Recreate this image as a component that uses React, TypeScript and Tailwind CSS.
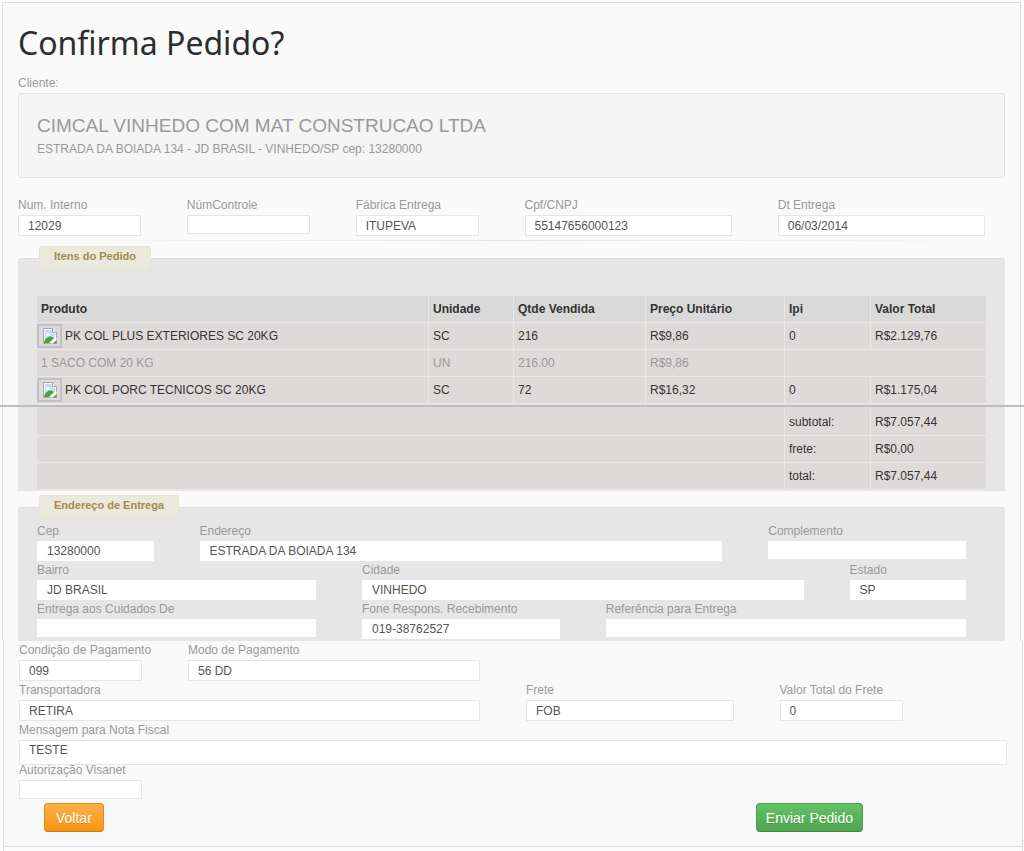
import { useId } from 'react';
import clsx from 'clsx';

interface FieldProps {
    label: string;
    value?: string;
    span: string;
    // 'framed' fields sit on the page, 'plain' ones inside a grey panel
    variant?: 'framed' | 'plain';
}

interface Item {
    produto: string;
    unidade: string;
    qtde: string;
    preco: string;
    ipi?: string;
    total?: string;
}

const itens: Item[] = [
    { produto: 'PK COL PLUS EXTERIORES SC 20KG', unidade: 'SC', qtde: '216', preco: 'R$9,86', ipi: '0', total: 'R$2.129,76' },
    { produto: '1 SACO COM 20 KG', unidade: 'UN', qtde: '216.00', preco: 'R$9,86' },
    { produto: 'PK COL PORC TECNICOS SC 20KG', unidade: 'SC', qtde: '72', preco: 'R$16,32', ipi: '0', total: 'R$1.175,04' },
];

const totais = [
    { nome: 'subtotal:', valor: 'R$7.057,44' },
    { nome: 'frete:', valor: 'R$0,00' },
    { nome: 'total:', valor: 'R$7.057,44' },
];

const cell = 'h-[27px] border-b border-l border-[#e9e7e7] px-1 py-0 text-left first:border-l-0';

function Field({ label, value = '', span, variant = 'framed' }: FieldProps) {
    const id = useId();
    const framed = variant === 'framed';

    return (
        <div className={clsx('flex flex-col pr-5', span)}>
            <label htmlFor={id} className="h-[19px] leading-[19px] whitespace-nowrap text-[#999]">
                {label}
            </label>
            <input
                id={id}
                type="text"
                defaultValue={value}
                className={clsx(
                    'w-full bg-white text-[#555] outline-none',
                    framed ? 'border border-[#e6e6e6] px-[9px]' : 'px-[10px]',
                    framed && (value ? 'h-[21px]' : 'h-[19px]'),
                    !framed && (value ? 'h-5' : 'h-[18px]'),
                )}
            />
        </div>
    );
}

function BrokenImage() {
    return (
        <span className="flex h-6 w-[25px] shrink-0 items-center justify-center border-2 border-[#bfc1c6]">
            <svg width="14" height="16" viewBox="0 0 14 16" aria-hidden="true">
                <path d="M.5.5h9l4 4v11H.5z" fill="#fff" stroke="#a5a8ad" />
                <path d="M2 2h7v3.500h3V10L7 14H2z" fill="#c6dbf8" />
                <path d="M3 6.500c0-2 3-2 3-.5 2 0 2 2 .5 2H3.500z" fill="#fff" />
                <path d="M1 14.500c1-4 5-7 8-5.500l2 1-5 5H1z" fill="#48a43c" />
                <path d="M13.500 9.500 7.500 15.500h2l4-3.500z" fill="#fff" />
                <path d="M13.500 12 10 15.500h3.500z" fill="#48a43c" />
                <path d="M9.500.5v4h4" fill="#f3f3f3" stroke="#a5a8ad" />
            </svg>
        </span>
    );
}

function PanelTitle({ children }: { children: string }) {
    return (
        <h2 className="-mt-[13px] ml-[21px] h-6 w-fit rounded-t-[3px] border border-[#e6e3d8] bg-[#ebe8dc] px-[14px] text-[11px] leading-[19px] font-bold text-[#a48b4e]">
            {children}
        </h2>
    );
}

function Columns() {
    return (
        <colgroup>
            <col />
            <col className="w-[85px]" />
            <col className="w-[132px]" />
            <col className="w-[139px]" />
            <col className="w-[86px]" />
            <col className="w-[116px]" />
        </colgroup>
    );
}

export default function App() {
    return (
        <form
            className="min-h-screen bg-[#fcfcfc] font-['Liberation_Sans',Arial,sans-serif] text-[12px] leading-5 text-[#333]"
            onSubmit={(e) => e.preventDefault()}
        >
            {/* Customer and ordered items */}
            <div className="border-b-2 border-[#bdbdbd] pt-[2px] pr-[3px] pl-[2px]">
                <div className="border-x border-t border-[#ddd] bg-[#fafafa] px-[15px]">
                    <h1 className="pt-4 pb-[6px] font-['Noto_Sans',sans-serif] text-[32px] leading-[48px] text-[#2d2d2d]">
                        Confirma Pedido?
                    </h1>
                    <p className="leading-5 text-[#999]">Cliente:</p>
                    <div className="h-[85px] rounded-[3px] border border-[#e3e3e3] bg-[#f5f5f5] px-[18px] pt-[19px] text-[#999]">
                        <p className="text-[19px] leading-[26px]">CIMCAL VINHEDO COM MAT CONSTRUCAO LTDA</p>
                        <p>ESTRADA DA BOIADA 134 - JD BRASIL - VINHEDO/SP cep: 13280000</p>
                    </div>

                    <div className="mt-[18px] grid h-11 grid-cols-12 gap-x-[26px]">
                        <Field label="Num. Interno" value="12029" span="col-span-2" />
                        <Field label="NúmControle" span="col-span-2" />
                        <Field label="Fábrica Entrega" value="ITUPEVA" span="col-span-2" />
                        <Field label="Cpf/CNPJ" value="55147656000123" span="col-span-3" />
                        <Field label="Dt Entrega" value="06/03/2014" span="col-span-3" />
                    </div>
                    <hr className="h-px border-0 bg-linear-to-r from-transparent via-[#e2e2e2] to-transparent" />

                    <section className="mt-[17px] rounded-t-[3px] border-t border-[#dcdcdc] bg-[#e6e6e6]">
                        <PanelTitle>Itens do Pedido</PanelTitle>
                        <div className="px-[19px] pt-[26px] pb-px">
                            <table className="w-full table-fixed border-separate border-spacing-0">
                                <Columns />
                                <thead>
                                    <tr className="bg-[#d9d9d9]">
                                        {['Produto', 'Unidade', 'Qtde Vendida', 'Preço Unitário', 'Ipi', 'Valor Total'].map((t) => (
                                            <th key={t} scope="col" className={cell}>{t}</th>
                                        ))}
                                    </tr>
                                </thead>
                                <tbody>
                                    {itens.map((item) => (
                                        <tr key={item.produto} className={clsx('bg-[#dedada]', !item.total && 'text-[#999]')}>
                                            <td className={clsx(cell, item.total && 'pl-0')}>
                                                <span className="flex items-center gap-[3px]">
                                                    {item.total && <BrokenImage />}
                                                    {item.produto}
                                                </span>
                                            </td>
                                            <td className={cell}>{item.unidade}</td>
                                            <td className={cell}>{item.qtde}</td>
                                            <td className={cell}>{item.preco}</td>
                                            {item.total ? (
                                                <>
                                                    <td className={cell}>{item.ipi}</td>
                                                    <td className={cell}>{item.total}</td>
                                                </>
                                            ) : (
                                                <td colSpan={2} className={cell} />
                                            )}
                                        </tr>
                                    ))}
                                </tbody>
                            </table>
                        </div>
                    </section>
                </div>
            </div>

            {/* Totals and delivery address */}
            <div className="pr-[3px] pl-[2px]">
                <div className="border-x border-[#ddd] bg-[#fafafa] px-[15px]">
                    <div className="bg-[#e6e6e6] px-[19px] pb-px">
                        <table className="w-full table-fixed border-separate border-spacing-0 bg-[#dedada] pt-[2px]">
                            <Columns />
                            <tbody>
                                {totais.map((t) => (
                                    <tr key={t.nome}>
                                        <td colSpan={4} className={cell} />
                                        <td className={cell}>{t.nome}</td>
                                        <td className={cell}>{t.valor}</td>
                                    </tr>
                                ))}
                            </tbody>
                        </table>
                    </div>

                    <section className="mt-4 rounded-t-[3px] border-t border-[#dcdcdc] bg-[#e6e6e6]">
                        <PanelTitle>Endereço de Entrega</PanelTitle>
                        <div className="grid grid-cols-12 gap-x-[26px] px-[19px] pt-[3px] pb-[2px]">
                            <Field variant="plain" label="Cep" value="13280000" span="col-span-2" />
                            <Field variant="plain" label="Endereço" value="ESTRADA DA BOIADA 134" span="col-span-7" />
                            <Field variant="plain" label="Complemento" span="col-span-3" />
                            <Field variant="plain" label="Bairro" value="JD BRASIL" span="col-span-4" />
                            <Field variant="plain" label="Cidade" value="VINHEDO" span="col-span-6" />
                            <Field variant="plain" label="Estado" value="SP" span="col-span-2" />
                            <Field variant="plain" label="Entrega aos Cuidados De" span="col-span-4" />
                            <Field variant="plain" label="Fone Respons. Recebimento" value="019-38762527" span="col-span-3" />
                            <Field variant="plain" label="Referência para Entrega" span="col-span-5" />
                        </div>
                    </section>
                </div>
            </div>

            {/* Payment */}
            <div className="pr-px pl-[3px]">
                <div className="border-x border-b border-[#ddd] bg-[#f9f9f9] px-[15px] pb-[14px]">
                    <div className="grid grid-cols-12 gap-x-[26px]">
                        <Field label="Condição de Pagamento" value="099" span="col-span-2" />
                        <Field label="Modo de Pagamento" value="56 DD" span="col-span-4" />
                        <Field label="Transportadora" value="RETIRA" span="col-span-6 col-start-1" />
                        <Field label="Frete" value="FOB" span="col-span-3" />
                        <Field label="Valor Total do Frete" value="0" span="col-span-2" />
                        <div className="col-span-12 flex flex-col">
                            <label htmlFor="mensagem" className="h-[19px] leading-[19px] text-[#999]">
                                Mensagem para Nota Fiscal
                            </label>
                            <textarea
                                id="mensagem"
                                rows={1}
                                defaultValue="TESTE"
                                className="h-[25px] w-full resize-none overflow-hidden border border-[#e6e6e6] bg-white px-[9px] leading-[19px] text-[#555] outline-none"
                            />
                        </div>
                        <Field label="Autorização Visanet" span="col-span-2 -mt-1" />
                    </div>
                    <div className="mt-1 flex justify-between pr-[144px] pl-[25px] text-[14px] leading-5 text-white">
                        <button
                            type="button"
                            className="h-[29px] rounded-[4px] border border-[#e08a1c] border-b-[#c07a20] bg-linear-to-b from-[#fbb04a] to-[#f89406] px-[11px] text-shadow-2xs"
                        >
                            Voltar
                        </button>
                        <button
                            type="submit"
                            className="h-[29px] rounded-[4px] border border-[#4ba04b] border-b-[#3d873d] bg-linear-to-b from-[#62c462] to-[#51a351] px-[9px] text-shadow-2xs"
                        >
                            Enviar Pedido
                        </button>
                    </div>
                </div>
                <div className="h-1 border-x border-[#ddd]" />
            </div>
        </form>
    );
}
